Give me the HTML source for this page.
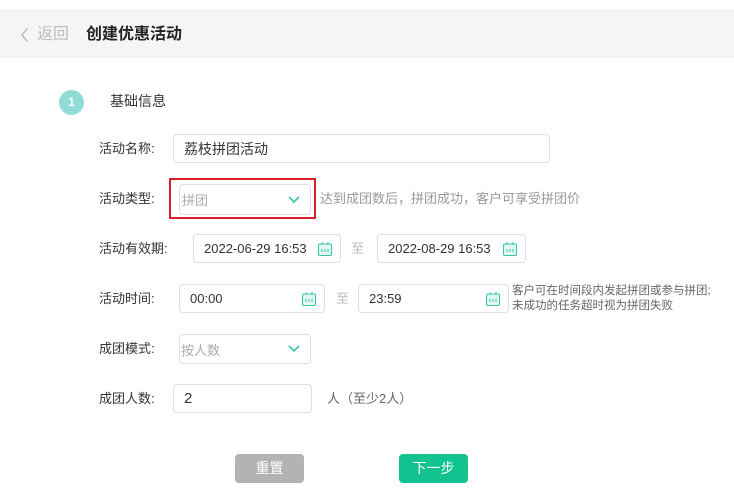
<!DOCTYPE html>
<html><head><meta charset="utf-8"><style>
*{margin:0;padding:0;box-sizing:border-box}
body{width:734px;height:500px;background:#fff;position:relative;overflow:hidden;font-family:"Liberation Sans","Noto Sans CJK SC",sans-serif;color:#333}
.a{position:absolute;white-space:nowrap}
.hd{position:absolute;left:0;top:9px;width:734px;height:49px;background:#f5f5f5}
.lbl{font-size:13px;color:#333;line-height:16px}
.in{position:absolute;border:1px solid #dcdfe6;border-radius:4px;background:#fff;font-size:13px;padding-left:10px;color:#333;display:flex;align-items:center}
.cal{position:absolute;right:7px;top:50%;margin-top:-8px}
.chev{position:absolute;right:10px;top:50%;margin-top:-4px}
.btn{position:absolute;width:69px;height:29px;border-radius:4px;color:#fff;font-size:14px;text-align:center;line-height:29px}
</style></head><body>
<div class="hd"></div>
<svg class="a" style="left:20px;top:27px" width="10" height="16"><path d="M7.5 1.5 L2 8 L7.5 14.5" stroke="#bdbdbd" stroke-width="1.6" fill="none"/></svg>
<div class="a" style="left:37px;top:25px;font-size:16px;color:#bdbdbd;line-height:20px">返回</div>
<div class="a" style="left:86px;top:25px;font-size:16px;font-weight:bold;color:#222;line-height:20px">创建优惠活动</div>
<div class="a" style="left:59px;top:90px;width:25px;height:25px;border-radius:50%;background:#91dcd6;color:#fff;font-size:12px;font-weight:bold;text-align:center;line-height:25px">1</div>
<div class="a" style="left:110px;top:93px;font-size:14px;color:#333;line-height:16px">基础信息</div>

<div class="a lbl" style="left:99px;top:141px">活动名称:</div>
<div class="in" style="left:173px;top:134px;width:377px;height:29px;font-size:14px">荔枝拼团活动</div>

<div class="a lbl" style="left:99px;top:191px">活动类型:</div>
<div class="a" style="left:169px;top:178px;width:147px;height:41px;border:2px solid #d9202a"></div>
<div class="in" style="left:179px;top:184px;width:132px;height:31px;color:#aaa;padding-left:2px">拼团<svg class="chev" width="12" height="8"><path d="M1 1 L6 6 L11 1" stroke="#35c6a8" stroke-width="1.6" fill="none"/></svg></div>
<div class="a" style="left:320px;top:191px;font-size:13px;color:#999;line-height:16px">达到成团数后，拼团成功，客户可享受拼团价</div>

<div class="a lbl" style="left:99px;top:241px">活动有效期:</div>
<div class="in" style="left:193px;top:234px;width:148px;height:29px">2022-06-29 16:53<svg class="cal" width="16" height="16"><rect x="1.5" y="3" width="13" height="11.5" rx="1.5" stroke="#35c6a8" fill="#e4f7f3"/><path d="M5 1v3M11 1v3M5 8v3M8 8v3M11 8v3" stroke="#35c6a8"/></svg></div>
<div class="a" style="left:351px;top:241px;font-size:13px;color:#bbb;line-height:16px">至</div>
<div class="in" style="left:377px;top:234px;width:149px;height:29px">2022-08-29 16:53<svg class="cal" width="16" height="16"><rect x="1.5" y="3" width="13" height="11.5" rx="1.5" stroke="#35c6a8" fill="#e4f7f3"/><path d="M5 1v3M11 1v3M5 8v3M8 8v3M11 8v3" stroke="#35c6a8"/></svg></div>

<div class="a lbl" style="left:99px;top:291px">活动时间:</div>
<div class="in" style="left:179px;top:284px;width:146px;height:29px">00:00<svg class="cal" width="16" height="16"><rect x="1.5" y="3" width="13" height="11.5" rx="1.5" stroke="#35c6a8" fill="#e4f7f3"/><path d="M5 1v3M11 1v3M5 8v3M8 8v3M11 8v3" stroke="#35c6a8"/></svg></div>
<div class="a" style="left:336px;top:291px;font-size:13px;color:#bbb;line-height:16px">至</div>
<div class="in" style="left:358px;top:284px;width:151px;height:29px">23:59<svg class="cal" width="16" height="16"><rect x="1.5" y="3" width="13" height="11.5" rx="1.5" stroke="#35c6a8" fill="#e4f7f3"/><path d="M5 1v3M11 1v3M5 8v3M8 8v3M11 8v3" stroke="#35c6a8"/></svg></div>
<div class="a" style="left:512px;top:284px;font-size:11.5px;color:#666;line-height:15px">客户可在时间段内发起拼团或参与拼团;<br>未成功的任务超时视为拼团失败</div>

<div class="a lbl" style="left:99px;top:341px">成团模式:</div>
<div class="in" style="left:179px;top:334px;width:132px;height:30px;color:#aaa;padding-left:1px">按人数<svg class="chev" width="12" height="8"><path d="M1 1 L6 6 L11 1" stroke="#35c6a8" stroke-width="1.6" fill="none"/></svg></div>

<div class="a lbl" style="left:99px;top:391px">成团人数:</div>
<div class="in" style="left:173px;top:384px;width:139px;height:29px;font-size:15px">2</div>
<div class="a" style="left:327px;top:391px;font-size:13px;color:#666;line-height:16px">人（至少2人）</div>

<div class="btn" style="left:235px;top:454px;background:#b3b3b3">重置</div>
<div class="btn" style="left:399px;top:454px;background:#13c38f">下一步</div>
</body></html>
